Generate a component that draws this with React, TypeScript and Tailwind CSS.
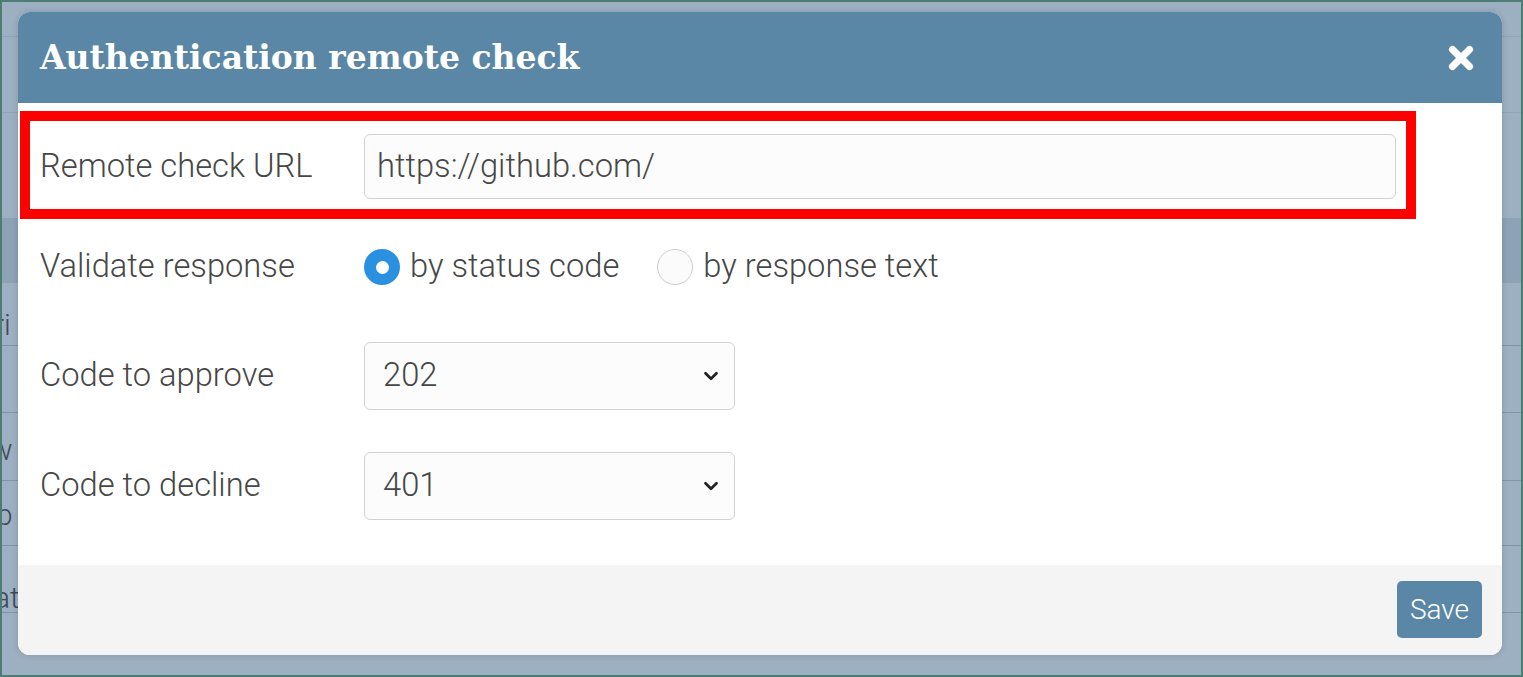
import { X, ChevronDown } from "lucide-react"

const bgLines = ["top-[343px]", "top-[410px]", "top-[478px]", "top-[543px]", "top-[610px]"]

function Backdrop() {
  return (
    <div className="absolute inset-0 bg-[#9cb0c2]">
      <div className="absolute left-0 right-0 top-[34px] h-px bg-[#8fa4b8]" />
      <div className="absolute left-0 right-0 top-[110px] h-px bg-[#8fa4b8]" />
      <div className="absolute left-0 right-0 top-[216px] h-[65px] bg-[#8da2b6]" />
      {bgLines.map((t) => (
        <div key={t} className={`absolute left-0 right-0 h-px bg-[#7f95a9] ${t}`} />
      ))}
      <span className="absolute left-[-8px] top-[300px] text-[30px] font-light text-[#3d4a57]">ri</span>
      <span className="absolute left-[-12px] top-[425px] text-[30px] font-light text-[#3d4a57]">w</span>
      <span className="absolute left-[-6px] top-[490px] text-[30px] font-light text-[#3d4a57]">b</span>
      <span className="absolute left-[-8px] top-[573px] text-[30px] font-light text-[#3d4a57]">at</span>
    </div>
  )
}

function Label({ children }: { children: React.ReactNode }) {
  return <div className="w-[324px] shrink-0 text-[32.7px] font-light text-[#474747]">{children}</div>
}

function Radio({ checked, label }: { checked?: boolean; label: string }) {
  return (
    <label className="flex items-center gap-[10px]">
      {checked ? (
        <span className="flex h-[36px] w-[36px] items-center justify-center rounded-full bg-[#2b90df]">
          <span className="h-[13px] w-[13px] rounded-full bg-white" />
        </span>
      ) : (
        <span className="h-[36px] w-[36px] rounded-full border border-[#cfcfcf] bg-[#fbfbfb]" />
      )}
      <span className="text-[32.7px] font-light text-[#474747]">{label}</span>
    </label>
  )
}

function Select({ value }: { value: string }) {
  return (
    <div className="flex h-[68px] w-[371px] items-center justify-between rounded-[6px] border border-[#d2d2d2] bg-[#fcfcfc] pl-[18px] pr-[12px]">
      <span className="text-[32.7px] font-light text-[#474747]">{value}</span>
      <ChevronDown className="h-[22px] w-[22px] text-[#222]" strokeWidth={3} />
    </div>
  )
}

export default function App() {
  return (
    <div className="relative h-[677px] w-[1523px] overflow-hidden border-2 border-[#4e7b74] font-['Roboto',sans-serif]">
      <Backdrop />
      <div className="relative pl-[16px] pt-[10px]">
        <div className="relative flex h-[643px] w-[1484px] flex-col overflow-hidden rounded-[12px] bg-white shadow-[0_0_6px_rgba(0,0,0,0.15)]">
          <div className="flex h-[91px] items-center justify-between bg-[#5b87a6] pl-[22px] pr-[24px]">
            <h1 className="font-['DejaVu_Serif',serif] text-[33px] font-bold text-white">
              Authentication remote check
            </h1>
            <X className="h-[34px] w-[34px] text-white" strokeWidth={5} />
          </div>
          <div className="flex flex-1 flex-col px-[22px] pt-[31px]">
            <div className="flex h-[65px] items-center">
              <Label>Remote check URL</Label>
              <div className="flex h-[65px] w-[1032px] items-center rounded-[6px] border border-[#d2d2d2] bg-[#fcfcfc] px-[12px]">
                <span className="text-[32.7px] font-light text-[#474747]">https://github.com/</span>
              </div>
            </div>
            <div className="mt-[50px] flex h-[36px] items-center">
              <Label>Validate response</Label>
              <div className="flex items-center gap-[38px]">
                <Radio checked label="by status code" />
                <Radio label="by response text" />
              </div>
            </div>
            <div className="mt-[57px] flex items-center">
              <Label>Code to approve</Label>
              <Select value="202" />
            </div>
            <div className="mt-[42px] flex items-center">
              <Label>Code to decline</Label>
              <Select value="401" />
            </div>
          </div>
          <div className="flex h-[90px] items-start justify-end bg-[#f4f4f4] pr-[20px] pt-[16px]">
            <button className="h-[57px] w-[85px] rounded-[5px] bg-[#5b87a6] text-[28px] font-light text-white">Save</button>
          </div>
        </div>
        <div className="absolute left-[18px] top-[109px] h-[108px] w-[1396px] border-[10px] border-[#ff0000]" />
      </div>
    </div>
  )
}
